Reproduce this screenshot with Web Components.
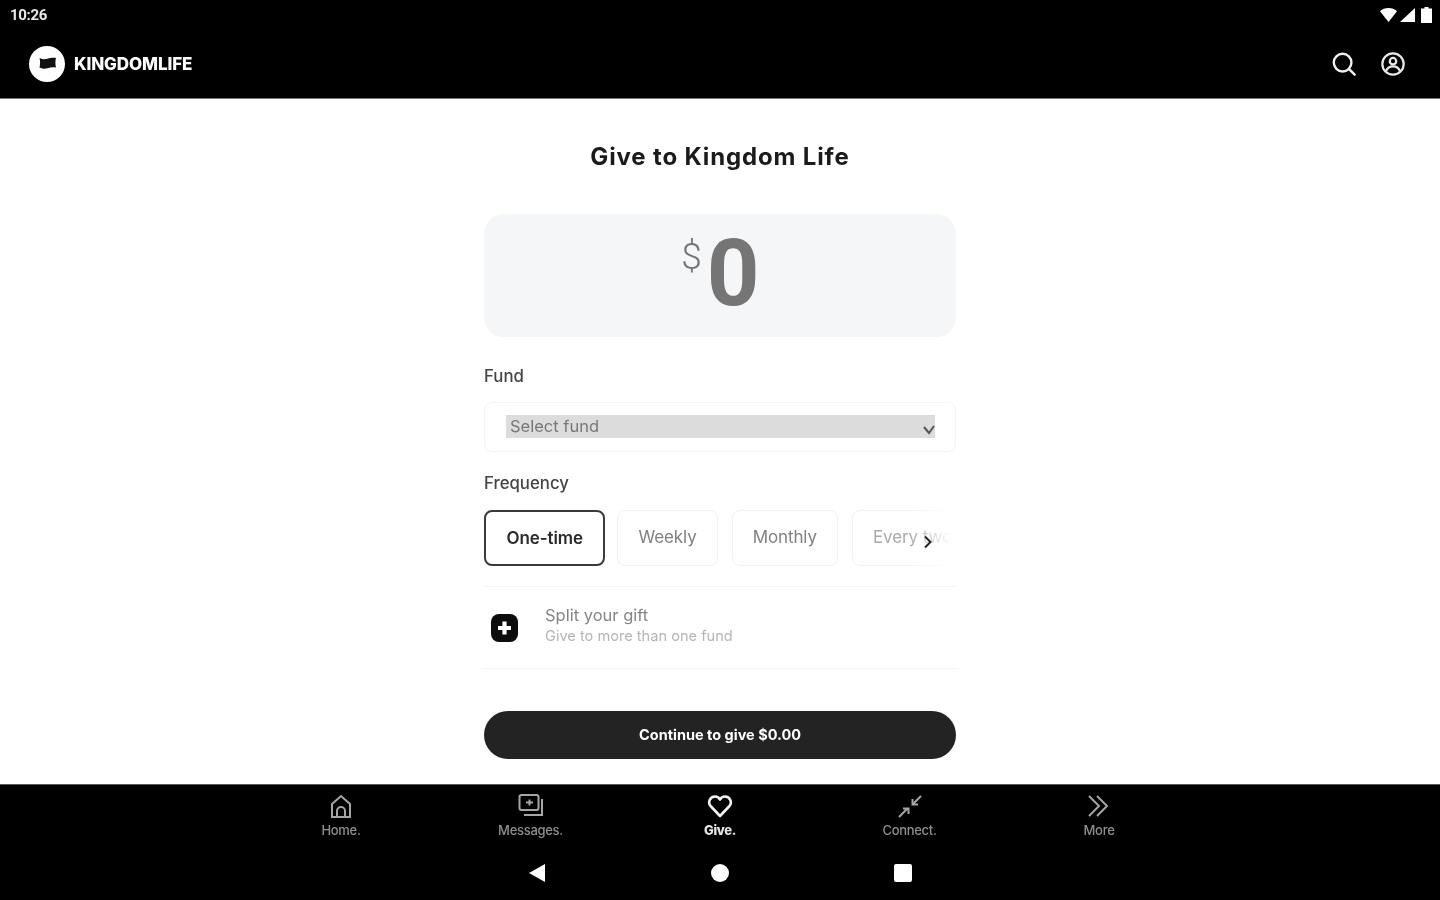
<!DOCTYPE html>
<html lang="en"><head><meta charset="utf-8"><title>Give</title>
<style>
html,body{margin:0;height:100%;background:#fff}
body{font-family:Inter,"Liberation Sans",sans-serif;overflow:hidden}
give-app{height:900px}
</style></head><body>
<give-app></give-app>
<script>
function def(name, html, setup){
  customElements.define(name, class extends HTMLElement{
    constructor(){super();this.attachShadow({mode:'open'}).innerHTML=html;}
    connectedCallback(){ if(setup) setup(this); }
  });
}
def('status-bar',`<style>
:host{display:flex;align-items:center;justify-content:space-between;height:29px;box-sizing:border-box;padding:1px 8px 0 10px;color:#e8e8e8;font:700 15px/1 Roboto,sans-serif;letter-spacing:-.3px}
.i{display:flex;gap:3px;align-items:center}
svg{display:block}
</style><span>10:26</span><span class="i">
<svg width="17" height="14" viewBox="0 0 17 14"><path d="M0 3.200C2.300 1.200 5.200 0 8.500 0s6.200 1.200 8.500 3.200L8.500 14z" fill="#fff"/></svg>
<svg width="15" height="14" viewBox="0 0 15 14"><path d="M15 0v14H0z" fill="#fff"/></svg>
<svg width="0" height="14" viewBox="0 0 1 14"></svg>
<svg width="11" height="16" viewBox="0 0 11 16"><path d="M3.500 0h4v1.500H11V16H0V1.500h3.500z" fill="#fff"/></svg>
</span>`);
def('app-header',`<style>
:host{display:flex;align-items:center;justify-content:space-between;height:70px;padding:0 34px 0 29px;box-sizing:border-box;color:#fff;border-bottom:1px solid #777}
.l{display:flex;align-items:center;gap:9px;font:800 17px/1 Inter,sans-serif;letter-spacing:-.1px}
.l span{padding-top:1px}
.r{display:flex;gap:23px;align-items:center}
svg{display:block}
</style><div class="l">
<svg width="36" height="36" viewBox="0 0 36 36"><circle cx="18" cy="18" r="18" fill="#fff"/><path d="M10.500 12c3 1.500 5.500 1.500 8 .8s5-1.300 8.500-.8c-.8 3-.8 6 0 9.500-3.500-.5-6 0-8.500.8s-5 .7-8-.8c.8-3 .8-6.500 0-9.500z" fill="#111"/></svg>
<span>KINGDOMLIFE</span></div><div class="r">
<svg width="26" height="26" viewBox="0 0 28 28" fill="none" stroke="#f0f0f0" stroke-width="2.600" stroke-linecap="round"><circle cx="12.500" cy="12.500" r="9.500"/><path d="M19.500 19.500l6 6"/></svg>
<svg width="26" height="26" viewBox="0 0 28 28" fill="none" stroke="#e8e8e8" stroke-width="2.400"><circle cx="14" cy="14" r="11.500"/><circle cx="14" cy="11" r="3.500"/><path d="M6.500 21.500c1.500-3.500 4-5 7.500-5s6 1.500 7.500 5"/></svg>
</div>`);
def('freq-chip',`<style>
:host{display:flex;flex:none;align-items:center;justify-content:center;height:56px;box-sizing:border-box;border:1px solid #f2f2f2;border-radius:8px;padding:0 20px;font:400 17px/1 Inter,sans-serif;color:#808080;letter-spacing:-.1px;white-space:nowrap;padding-bottom:2px}
:host([selected]){border:2px solid #3a3a3a;color:#2a2a2a;font-weight:600;padding:0 20.500px;margin-right:-2px}
:host([faded]){color:#aaa}
</style><slot></slot>`);
def('give-form',`<style>
:host{display:flex;flex-direction:column;width:472px;margin:0 auto;color:#333;height:100%;box-sizing:border-box;padding-top:43px}
h1{margin:0 0 42px;text-align:center;font:700 24px/30px Inter,sans-serif;color:#1b1b1b;letter-spacing:.85px}
.amt{display:flex;justify-content:center;height:123px;background:#f4f6f8;border-radius:20px;color:#757575;padding-top:15px;box-sizing:border-box}
.amt .d{font:300 37px/1 Roboto,sans-serif;margin:9px 5px 0 0}
.amt .n{font:700 92px/90px Roboto,sans-serif;margin-right:-1px}
label{display:block;font:500 16.800px/20px Inter,sans-serif;color:#444;margin:29px 0 16px}
label.f{margin:21px 0 17px}
.sel{height:50px;border:1px solid #f4f4f4;border-radius:8px;box-sizing:border-box;padding:12px 20px 0 21px}
.sel div{position:relative;height:23px;background:#dcdcdc;padding-left:4px;font:400 16.500px/22px Inter,sans-serif;color:#777}
.sel svg{position:absolute;right:-1px;top:7px}
.rail{position:relative;display:flex;gap:14px;overflow:hidden;height:56px}
.rail .fade{position:absolute;right:0;top:0;bottom:0;width:48px;background:linear-gradient(90deg,rgba(255,255,255,0),#fff 90%)}
.rail svg{position:absolute;right:23px;top:25px}
.split{display:flex;align-items:center;height:81px;border-top:1px solid #f3f3f3;border-bottom:1px solid #f3f3f3;margin-top:20px;gap:27px;padding-left:7px}
.split svg{flex:none}
.split>div{margin-top:-6px}
.split b{display:block;font:400 16.500px/20px Inter,sans-serif;color:#858585;margin-bottom:3px}
.split span{display:block;font:400 14.600px/17px Inter,sans-serif;color:#b5b5b5}
button{all:unset;display:block;margin-top:42px;height:48px;border-radius:24px;background:#232323;color:#fff;text-align:center;font:700 14.500px/46px Inter,sans-serif;letter-spacing:0}
</style>
<h1>Give to Kingdom Life</h1>
<div class="amt"><span class="d">$</span><span class="n">0</span></div>
<label>Fund</label>
<div class="sel"><div>Select fund<svg width="14" height="14" viewBox="0 0 14 14" fill="none" stroke="#555" stroke-width="2"><path d="M2 5l5 6 5-7"/></svg></div></div>
<label class="f">Frequency</label>
<div class="rail"><freq-chip selected>One-time</freq-chip><freq-chip>Weekly</freq-chip><freq-chip>Monthly</freq-chip><freq-chip faded>Every two weeks</freq-chip><i class="fade"></i>
<svg width="10" height="14" viewBox="0 0 10 14" fill="none" stroke="#222" stroke-width="2"><path d="M2 1.500l5.500 5.500L2 12.500"/></svg></div>
<div class="split"><svg width="27" height="28" viewBox="0 0 27 28"><rect width="27" height="28" rx="8" fill="#0c0c0c"/><path d="M13.500 7.500v13M7 14h13" stroke="#fff" stroke-width="4.200"/></svg>
<div><b>Split your gift</b><span>Give to more than one fund</span></div></div>
<button>Continue to give $0.00</button>`);
def('nav-item',`<style>
:host{display:flex;flex-direction:column;align-items:center;width:189.500px;height:70px;color:#8f8f8f;font:500 13px/16px Inter,sans-serif;letter-spacing:-.3px;padding-top:8px;box-sizing:border-box}
:host([active]){color:#e6e6e6;font-weight:800}
::slotted(svg){display:block;margin-bottom:3px}
</style><slot></slot>`);
def('bottom-nav',`<style>
:host{display:block;background:#000;border-top:1px solid #555;height:116px;box-sizing:border-box}
.t{display:flex;justify-content:center;height:70px}
.s{display:flex;justify-content:center;align-items:center;height:36px;gap:0}
.s span{display:flex;justify-content:center;width:183px}
svg{display:block}
</style><div class="t">
<nav-item><svg width="26" height="26" viewBox="0 0 26 26" fill="none" stroke="#a5a5a5" stroke-width="2"><path d="M4 24V11l9-8 9 8v13z"/><path d="M9 24v-6a4 4 0 018 0v6"/></svg>Home.</nav-item>
<nav-item><svg width="26" height="26" viewBox="0 0 26 26" fill="none" stroke="#a5a5a5" stroke-width="2"><rect x="1.500" y="2" width="19" height="15" rx="2"/><path d="M24 6v16H6M8 9.500h7M11.500 6.500v6"/></svg>Messages.</nav-item>
<nav-item active><svg width="26" height="26" viewBox="0 0 26 26" fill="none" stroke="#f2f2f2" stroke-width="2.600" stroke-linejoin="round"><path d="M13 23L3.500 13C.5 9.500 3 3.500 8 3.500c2.300 0 4 1.200 5 3 1-1.800 2.700-3 5-3 5 0 7.500 6 4.500 9.500z"/></svg>Give.</nav-item>
<nav-item><svg width="26" height="26" viewBox="0 0 26 26" fill="none" stroke="#a5a5a5" stroke-width="2"><path d="M2 24l9-9M6 15.500h5.500V21M24 3l-8 8M15.500 6v5.500H21"/></svg>Connect.</nav-item>
<nav-item><svg width="26" height="26" viewBox="0 0 26 26" fill="none" stroke="#a5a5a5" stroke-width="2"><path d="M3 3l10 10-10 10M11 3l10 10-10 10"/></svg>More</nav-item>
</div><div class="s">
<span><svg width="20" height="20" viewBox="0 0 20 20"><path d="M18 1v18L2 10z" fill="#fff"/></svg></span>
<span><svg width="20" height="20" viewBox="0 0 20 20"><circle cx="10" cy="10" r="9" fill="#fff"/></svg></span>
<span><svg width="20" height="20" viewBox="0 0 20 20"><rect x="1" y="1" width="18" height="18" rx="2" fill="#fff"/></svg></span>
</div>`);
def('give-app',`<style>
:host{display:flex;flex-direction:column;height:900px;background:#fff;filter:blur(.6px)}
.top{background:#000;flex:none}
main{flex:1;min-height:0;overflow:hidden}
bottom-nav{flex:none}
</style><div class="top"><status-bar></status-bar><app-header></app-header></div><main><give-form></give-form></main><bottom-nav></bottom-nav>`);
</script>
</body></html>
